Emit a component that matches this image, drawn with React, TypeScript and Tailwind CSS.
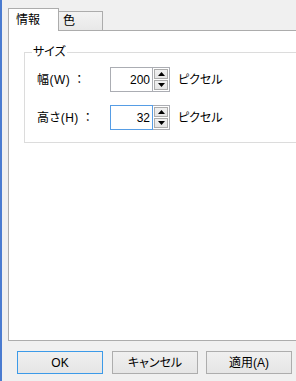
import React from 'react';

const font = "[font-family:'Liberation_Sans','Noto_Sans_CJK_JP',sans-serif] [font-feature-settings:'palt']";

const Arrow = ({ up }: { up?: boolean }) => (
  <svg width="7" height="4" viewBox="0 0 7 4" className="block">
    {up ? <polygon points="0,4 7,4 3.5,0" fill="#000" /> : <polygon points="0,0 7,0 3.5,4" fill="#000" />}
  </svg>
);

const SpinBox = ({ value, focused }: { value: string; focused?: boolean }) => (
  <div className="flex h-[25px]">
    <div
      className={`w-[43px] h-full bg-white border flex items-center justify-end pr-[2px] ${
        focused ? 'border-[#569de5]' : 'border-[#abadb3]'
      }`}
    >
      {value}
    </div>
    <div className="w-[17px] h-full bg-white border-y border-r border-[#abadb3] flex flex-col gap-px p-px">
      <div className="flex-1 border border-[#acacac] bg-gradient-to-b from-[#f0f0f0] to-[#e5e5e5] flex items-center justify-center">
        <Arrow up />
      </div>
      <div className="flex-1 border border-[#acacac] bg-gradient-to-b from-[#f0f0f0] to-[#e5e5e5] flex items-center justify-center">
        <Arrow />
      </div>
    </div>
  </div>
);

const Row = ({ label, value, focused }: { label: string; value: string; focused?: boolean }) => (
  <div className="flex items-center h-[25px]">
    <span className="w-[73px] flex">
      <span className="tracking-[0.5px]">{label}</span>
      <span className="ml-[3px] [font-feature-settings:normal]">：</span>
    </span>
    <SpinBox value={value} focused={focused} />
    <span className="ml-[8px]">ピクセル</span>
  </div>
);

const Button = ({ children, primary }: { children: React.ReactNode; primary?: boolean }) => (
  <button
    className={`w-[86px] h-[23px] border bg-gradient-to-b from-[#f0f0f0] to-[#e5e5e5] flex items-center justify-center text-black ${
      primary ? 'border-[#3c9ae8]' : 'border-[#adadad]'
    }`}
  >
    {children}
  </button>
);

export default function App() {
  return (
    <div className={`w-[296px] h-[381px] overflow-hidden bg-[#f0f0f0] border-l-2 border-[#4a7bd0] pl-[6px] pt-[8px] text-[12px] text-black ${font}`}>
      {/* tabs */}
      <div className="flex items-end h-[22px]">
        <div className="relative z-10 w-[51px] h-[23px] -mb-px bg-white border-x border-t border-[#acacac] pl-[7px] flex items-center">
          情報
        </div>
        <div className="w-[44px] h-[19px] border-t border-r border-[#acacac] bg-gradient-to-b from-[#f3f3f3] to-[#e8e8e8] pl-[4px] flex items-center">
          色
        </div>
      </div>

      {/* panel */}
      <div className="w-[300px] h-[311px] bg-white border border-[#acacac]">
        <fieldset className="mt-[13px] ml-[15px] w-[300px] border border-[#dcdcdc] pl-[12px] pb-[12px]">
          <legend className="ml-[-5px] px-[1px] leading-[16px]">サイズ</legend>
          <div className="mt-[7px] flex flex-col gap-[13px]">
            <Row label="幅(W)" value="200" />
            <Row label="高さ(H)" value="32" focused />
          </div>
        </fieldset>
      </div>

      {/* buttons */}
      <div className="mt-[10px] pl-[9px] flex gap-[9px]">
        <Button primary>OK</Button>
        <Button>キャンセル</Button>
        <div className="-ml-px">
          <Button>適用(A)</Button>
        </div>
      </div>
    </div>
  );
}
